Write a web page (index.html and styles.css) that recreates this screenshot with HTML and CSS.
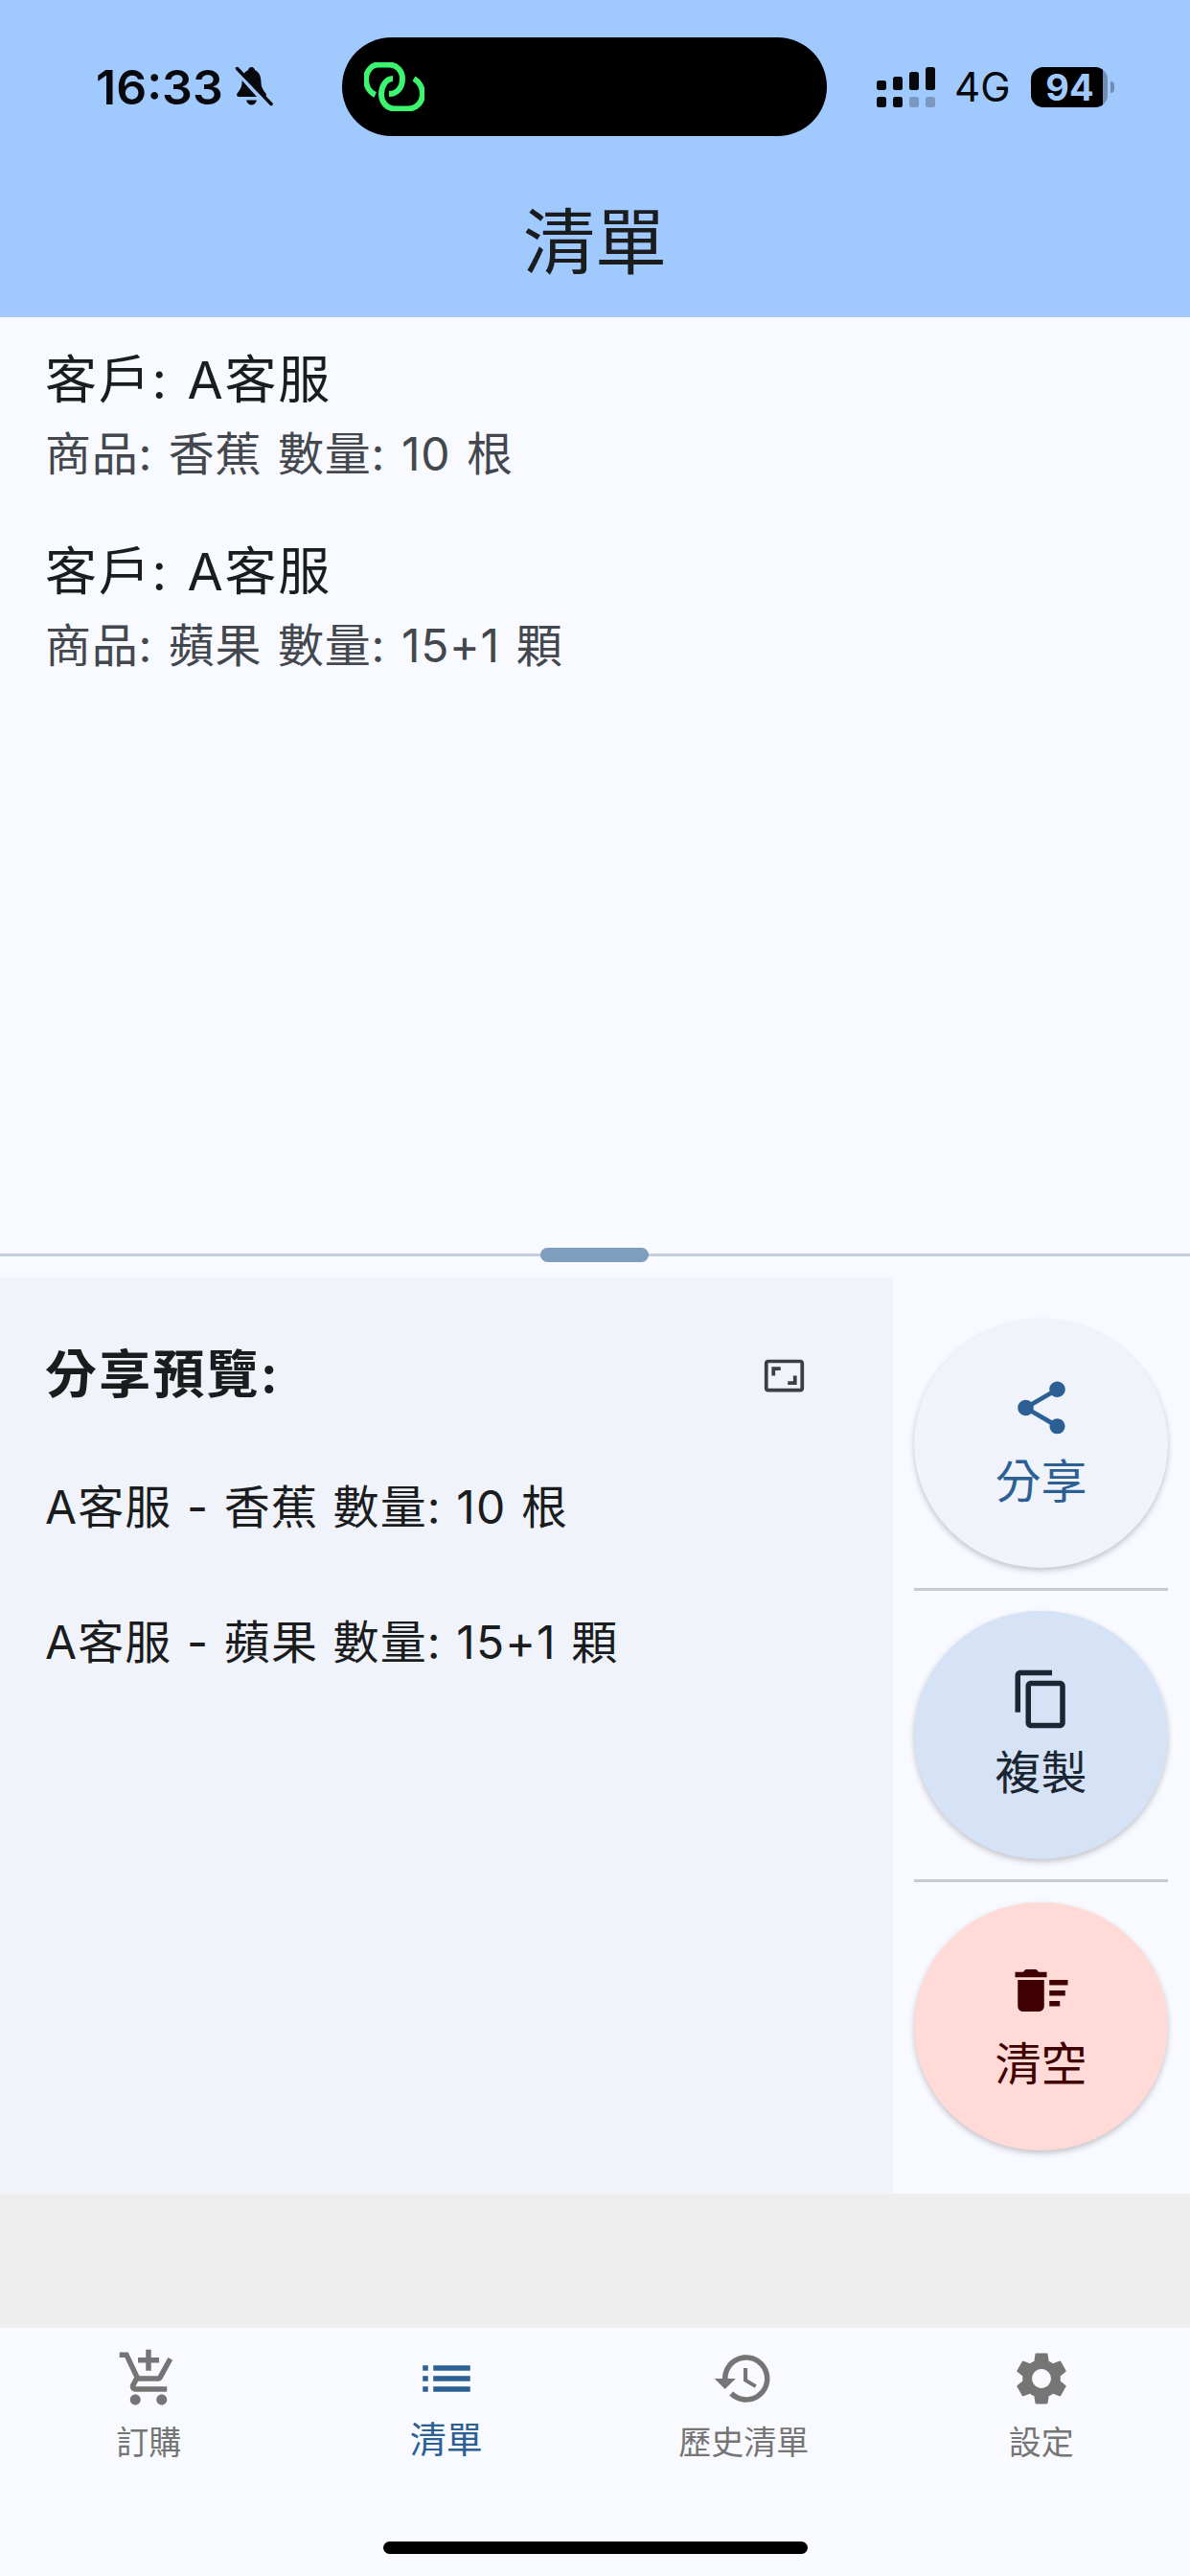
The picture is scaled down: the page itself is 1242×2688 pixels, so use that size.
FILE: index.html
```html
<!DOCTYPE html>
<html lang="zh-Hant">
<head>
    <meta charset="UTF-8">
    <meta name="viewport" content="width=device-width, initial-scale=1.0">
    <title>清單</title>
    <link rel="stylesheet" href="styles.css">
</head>
<body>
    <div class="app">
        <header class="app-bar">
            <div class="status-bar">
                <div class="status-left">
                    <span class="status-time">16:33</span>
                    <svg class="bell-icon" viewBox="0 0 38 42">
                        <path d="M16.5 0c-2 0-3.200 1.500-3.600 3.200C8.500 5 6.500 10 6.500 16c0 5-2.500 8.500-5 11.500C.5 29.500 1.500 31 3.500 31h26c2 0 3-1.500 2-3.500-2.500-3-5-6.500-5-11.500 0-6-2-11-6.400-12.800C19.700 1.500 18.500 0 16.500 0zM11 34.500h11c-.8 3-3 5-5.500 5s-4.700-2-5.500-5z"/>
                        <path class="bell-gap" d="M-2 0L36 42"/>
                        <path class="bell-slash" d="M1.500 1.500L37 38.500"/>
                    </svg>
                </div>
                <div class="island">
                    <svg class="link-icon" viewBox="0 0 63 51">
                        <path d="M11.700 34C5 31 2 24 2 18C2 9 8 2.500 15 2.500H26C34 2.500 40 9 40 17C40 27 34 33 26 33"/>
                        <path d="M30 17C23 17 18 25 18 33C18 42 24 48.500 32 48.500H46C55 48.500 61 41 61 33C61 26 57 20 52 17"/>
                    </svg>
                </div>
                <div class="status-right">
                    <svg class="signal-icon" viewBox="0 0 61 42">
                        <rect x="0" y="14" width="10" height="10" rx="2.500"/>
                        <rect x="17" y="10" width="10" height="14" rx="2.500"/>
                        <rect x="34" y="5" width="10" height="19" rx="2.500"/>
                        <rect x="51" y="0" width="10" height="24" rx="2.500"/>
                        <rect x="0" y="31" width="10" height="11" rx="2.500"/>
                        <rect x="17" y="31" width="10" height="11" rx="2.500"/>
                        <rect class="signal-off" x="34" y="31" width="10" height="11" rx="2.500"/>
                        <rect class="signal-off" x="51" y="31" width="10" height="11" rx="2.500"/>
                    </svg>
                    <span class="network">4G</span>
                    <span class="battery">94</span>
                    <span class="battery-cap"></span>
                </div>
            </div>
            <h1 class="page-title">清單</h1>
        </header>

        <main class="order-list">
            <div class="order-item">
                <div class="order-customer">客戶: A客服</div>
                <div class="order-detail">商品: 香蕉 數量: 10 根</div>
            </div>
            <div class="order-item">
                <div class="order-customer">客戶: A客服</div>
                <div class="order-detail">商品: 蘋果 數量: 15+1 顆</div>
            </div>
        </main>

        <div class="splitter">
            <div class="splitter-handle"></div>
        </div>

        <section class="share-area">
            <div class="preview">
                <div class="preview-head">
                    <h2 class="preview-title">分享預覽:</h2>
                    <svg class="expand-icon" viewBox="0 0 24 24">
                        <path d="M19 12h-2v3h-3v2h5v-5zM7 9h3V7H5v5h2V9zm14-6H3c-1.100 0-2 .9-2 2v14c0 1.100.9 2 2 2h18c1.100 0 2-.9 2-2V5c0-1.100-.9-2-2-2zm0 16.010H3V4.990h18v14.020z"/>
                    </svg>
                </div>
                <p class="preview-line">A客服 - 香蕉 數量: 10 根</p>
                <p class="preview-line">A客服 - 蘋果 數量: 15+1 顆</p>
            </div>
            <div class="actions">
                <button class="action action-share">
                    <svg class="action-icon" viewBox="0 0 24 24">
                        <path d="M18 16.080c-.76 0-1.440.3-1.960.77L8.910 12.700c.05-.23.09-.46.09-.7s-.04-.47-.09-.7l7.050-4.110c.54.5 1.250.81 2.040.81 1.660 0 3-1.340 3-3s-1.340-3-3-3-3 1.340-3 3c0 .24.04.47.09.7L8.040 9.810C7.500 9.310 6.790 9 6 9c-1.660 0-3 1.340-3 3s1.340 3 3 3c.79 0 1.500-.31 2.040-.81l7.120 4.160c-.05.21-.08.43-.08.65 0 1.610 1.310 2.920 2.920 2.920 1.610 0 2.920-1.310 2.920-2.920s-1.310-2.920-2.920-2.920z"/>
                    </svg>
                    <span class="action-label">分享</span>
                </button>
                <div class="action-divider"></div>
                <button class="action action-copy">
                    <svg class="action-icon" viewBox="0 0 24 24">
                        <path d="M16 1H4c-1.100 0-2 .9-2 2v14h2V3h12V1zm3 4H8c-1.100 0-2 .9-2 2v14c0 1.100.9 2 2 2h11c1.100 0 2-.9 2-2V7c0-1.100-.9-2-2-2zm0 16H8V7h11v14z"/>
                    </svg>
                    <span class="action-label">複製</span>
                </button>
                <div class="action-divider"></div>
                <button class="action action-clear">
                    <svg class="action-icon" viewBox="0 0 24 24">
                        <path d="M15 16h4v2h-4zm0-8h7v2h-7zm0 4h6v2h-6zM3 18c0 1.100.9 2 2 2h6c1.100 0 2-.9 2-2V8H3v10zM14 5h-3l-1-1H6L5 5H2v2h12z"/>
                    </svg>
                    <span class="action-label">清空</span>
                </button>
            </div>
        </section>

        <div class="spacer-strip"></div>

        <nav class="bottom-nav">
            <div class="nav-tabs">
                <div class="nav-tab">
                    <svg class="nav-icon" viewBox="0 0 24 24">
                        <path d="M11 9h2V6h3V4h-3V1h-2v3H8v2h3v3zm-4 9c-1.100 0-1.990.9-1.990 2S5.900 22 7 22s2-.9 2-2-.9-2-2-2zm10 0c-1.100 0-1.990.9-1.990 2s.89 2 1.990 2 2-.9 2-2-.9-2-2-2zm-9.830-3.250l.03-.12.9-1.630h7.450c.75 0 1.410-.41 1.750-1.030l3.860-7.010L19.420 4h-.01l-1.100 2-2.760 5H8.530l-.13-.27L6.160 6l-.95-2-.94-2H1v2h2l3.600 7.590-1.350 2.450c-.16.28-.25.61-.25.96 0 1.100.9 2 2 2h12v-2H7.420c-.13 0-.25-.11-.25-.25z"/>
                    </svg>
                    <span class="nav-label">訂購</span>
                </div>
                <div class="nav-tab nav-tab-active">
                    <svg class="nav-icon" viewBox="0 0 24 24">
                        <path d="M3 13h2v-2H3v2zm0 4h2v-2H3v2zm0-8h2V7H3v2zm4 4h14v-2H7v2zm0 4h14v-2H7v2zM7 7v2h14V7H7z"/>
                    </svg>
                    <span class="nav-label">清單</span>
                </div>
                <div class="nav-tab">
                    <svg class="nav-icon" viewBox="0 0 24 24">
                        <path d="M13 3c-4.970 0-9 4.030-9 9H1l3.890 3.890.07.14L9 12H6c0-3.870 3.130-7 7-7s7 3.130 7 7-3.130 7-7 7c-1.930 0-3.680-.79-4.940-2.060l-1.420 1.420C8.270 19.990 10.510 21 13 21c4.970 0 9-4.030 9-9s-4.030-9-9-9zm-1 5v5l4.280 2.540.72-1.210-3.500-2.080V8H12z"/>
                    </svg>
                    <span class="nav-label">歷史清單</span>
                </div>
                <div class="nav-tab">
                    <svg class="nav-icon" viewBox="0 0 24 24">
                        <path d="M19.140 12.940c.04-.3.06-.61.06-.94 0-.32-.02-.64-.07-.94l2.030-1.580c.18-.14.23-.41.12-.61l-1.920-3.320c-.12-.22-.37-.29-.59-.22l-2.390.96c-.5-.38-1.030-.7-1.620-.94l-.36-2.540c-.04-.24-.24-.41-.48-.41h-3.840c-.24 0-.43.17-.47.41l-.36 2.540c-.59.24-1.130.57-1.620.94l-2.390-.96c-.22-.08-.47 0-.59.22L2.740 8.870c-.12.21-.08.47.12.61l2.030 1.580c-.05.3-.09.63-.09.94s.02.64.07.94l-2.030 1.580c-.18.14-.23.41-.12.61l1.920 3.320c.12.22.37.29.59.22l2.390-.96c.5.38 1.030.7 1.620.94l.36 2.540c.05.24.24.41.48.41h3.840c.24 0 .44-.17.47-.41l.36-2.540c.59-.24 1.130-.56 1.620-.94l2.390.96c.22.08.47 0 .59-.22l1.920-3.320c.12-.22.07-.47-.12-.61l-2.010-1.580zM12 15.600c-1.980 0-3.600-1.620-3.600-3.600s1.620-3.600 3.600-3.600 3.600 1.620 3.600 3.600-1.620 3.600-3.600 3.600z"/>
                    </svg>
                    <span class="nav-label">設定</span>
                </div>
            </div>
            <div class="home-indicator"></div>
        </nav>
    </div>
</body>
</html>
```

FILE: styles.css
```css
body {
    margin: 0;
    font-family: Inter, "Noto Sans CJK TC", sans-serif;
    color: #1a1c1e;
    background-color: #f9faff;
}
.app {
    display: flex;
    flex-direction: column;
    width: 1242px;
    height: 2688px;
    overflow: hidden;
}

/* top bar */
.app-bar {
    height: 331px;
    background-color: #a0c9fe;
    flex-shrink: 0;
}
.status-bar {
    display: flex;
    align-items: center;
    height: 103px;
    padding-top: 39px;
}
.status-left {
    display: flex;
    align-items: center;
    gap: 13px;
    width: 357px;
    padding-left: 100px;
    box-sizing: border-box;
    flex-shrink: 0;
}
.status-time {
    font-size: 50px;
    font-weight: 600;
    line-height: 60px;
    color: #08090c;
}
.bell-icon {
    width: 38px;
    height: 42px;
    overflow: visible;
    fill: #08090c;
}
.bell-gap {
    fill: none;
    stroke: #a0c9fe;
    stroke-width: 6;
}
.bell-slash {
    fill: none;
    stroke: #08090c;
    stroke-width: 3.500;
    stroke-linecap: round;
}
.island {
    display: flex;
    align-items: center;
    width: 506px;
    height: 103px;
    padding-left: 23px;
    box-sizing: border-box;
    border-radius: 52px;
    background-color: #000;
    flex-shrink: 0;
}
.link-icon {
    width: 63px;
    height: 51px;
    fill: none;
    stroke: #3bf56f;
    stroke-width: 6;
    stroke-linecap: butt;
}
.status-right {
    display: flex;
    align-items: center;
    margin-left: 52px;
}
.signal-icon {
    width: 61px;
    height: 42px;
    fill: #08090c;
}
.signal-off {
    opacity: 0.25;
}
.network {
    margin-left: 20px;
    font-size: 42px;
    line-height: 42px;
    color: #08090c;
}
.battery {
    width: 80px;
    height: 42px;
    margin-left: 22px;
    border-radius: 13px;
    background: linear-gradient(to right, #000 94%, rgba(0, 0, 0, 0.3) 94%);
    font-size: 38px;
    font-weight: 700;
    line-height: 42px;
    text-align: center;
    color: #a0c9fe;
}
.battery-cap {
    width: 4px;
    height: 12px;
    margin-left: 3px;
    border-radius: 0 6px 6px 0;
    background-color: rgba(0, 0, 0, 0.3);
}
.page-title {
    margin: 0;
    margin-top: 71px;
    font-size: 75px;
    font-weight: 400;
    line-height: 80px;
    text-align: center;
}

/* upper list */
.order-list {
    display: flex;
    flex-direction: column;
    gap: 46px;
    height: 977px;
    padding: 28px 0 0 47px;
    box-sizing: border-box;
    flex-shrink: 0;
}
.order-customer {
    font-size: 54px;
    line-height: 76px;
    letter-spacing: 1.7px;
    word-spacing: 3px;
}
.order-detail {
    font-size: 48px;
    line-height: 78px;
    letter-spacing: 0.75px;
    word-spacing: 2.5px;
    color: #43474e;
}
.splitter {
    position: relative;
    height: 25px;
    flex-shrink: 0;
}
.splitter::before {
    content: "";
    display: block;
    height: 3px;
    background-color: #c3cfe0;
}
.splitter-handle {
    position: absolute;
    left: 564px;
    top: -6px;
    width: 113px;
    height: 15px;
    border-radius: 8px;
    background-color: #7f9dbd;
}

/* preview and buttons */
.share-area {
    display: flex;
    height: 956px;
    flex-shrink: 0;
}
.preview {
    width: 932px;
    padding: 64px 91px 0 47px;
    box-sizing: border-box;
    background-color: #f0f3fa;
}
.preview-head {
    display: flex;
    align-items: center;
    justify-content: space-between;
    margin-bottom: 65px;
}
.preview-title {
    margin: 0;
    font-size: 54px;
    font-weight: 700;
    line-height: 76px;
    letter-spacing: 2.2px;
}
.expand-icon {
    width: 45px;
    height: 45px;
    fill: #3a3f47;
}
.preview-line {
    margin: 0 0 71px;
    font-size: 48px;
    line-height: 70px;
    letter-spacing: 1.1px;
    word-spacing: 1px;
}
.actions {
    display: flex;
    flex-direction: column;
    flex: 1;
    padding: 44px 23px 0 22px;
}
.action {
    display: flex;
    flex-direction: column;
    align-items: center;
    justify-content: center;
    gap: 10px;
    height: 259px;
    padding: 3px 0 0;
    border: none;
    border-radius: 50%;
    box-shadow: 0 3px 6px rgba(0, 0, 0, 0.22);
    font-family: inherit;
    flex-shrink: 0;
}
.action-share {
    background-color: #f1f3fa;
    color: #2c5f94;
}
.action-copy {
    background-color: #d6e3f7;
    color: #1b2633;
}
.action-clear {
    background-color: #ffdad6;
    color: #410002;
}
.action-icon {
    display: block;
    width: 66px;
    height: 66px;
    fill: currentColor;
}
.action-label {
    font-size: 48px;
    line-height: 68px;
}
.action-divider {
    height: 3px;
    margin: 21px 0;
    background-color: #c4cbd5;
    flex-shrink: 0;
}
.spacer-strip {
    height: 140px;
    background-color: #eeeeee;
    flex-shrink: 0;
}

/* bottom nav */
.bottom-nav {
    flex: 1;
    display: flex;
    flex-direction: column;
    align-items: center;
}
.nav-tabs {
    display: grid;
    grid-template-columns: repeat(4, 1fr);
    width: 100%;
    height: 223px;
    padding-top: 20px;
    box-sizing: border-box;
}
.nav-tab {
    display: flex;
    flex-direction: column;
    align-items: center;
    color: #757575;
}
.nav-icon {
    display: block;
    width: 66px;
    height: 66px;
    fill: currentColor;
}
.nav-label {
    margin-top: 9px;
    font-size: 34px;
    line-height: 50px;
}
.nav-tab-active {
    color: #2c5f94;
}
.nav-tab-active .nav-label {
    margin-top: 5px;
    font-size: 38px;
}
.home-indicator {
    width: 443px;
    height: 13px;
    border-radius: 7px;
    background-color: #000;
}
```
